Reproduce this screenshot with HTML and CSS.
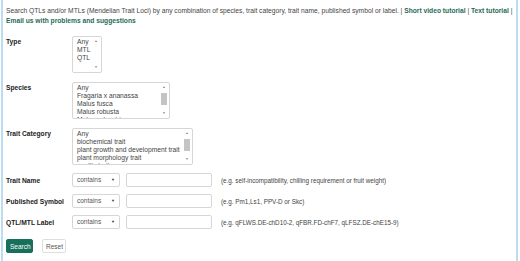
FILE: index.html
```html
<!DOCTYPE html>
<html lang="en">
<head>
    <meta charset="UTF-8">
    <meta name="viewport" content="width=device-width, initial-scale=1.0">
    <title>QTL Search</title>
    <link rel="stylesheet" href="styles.css">
</head>
<body>
    <div class="panel">
        <p class="intro">Search QTLs and/or MTLs (Mendelian Trait Loci) by any combination of species, trait category, trait name, published symbol or label. | <a href="#">Short video tutorial</a> | <a href="#">Text tutorial</a> |<br><a href="#">Email us with problems and suggestions</a></p>

        <form id="searchForm">
            <div class="row top">
                <label>Type</label>
                <div class="listbox type-box">
                    <ul class="opts">
                        <li>Any</li>
                        <li>MTL</li>
                        <li>QTL</li>
                    </ul>
                    <div class="sbar"><span class="arr">&#9650;</span><span class="track"></span><span class="arr">&#9660;</span></div>
                </div>
            </div>

            <div class="row top">
                <label>Species</label>
                <div class="listbox species-box">
                    <ul class="opts">
                        <li>Any</li>
                        <li>Fragaria x ananassa</li>
                        <li>Malus fusca</li>
                        <li>Malus robusta</li>
                        <li>Malus sylvestris</li>
                    </ul>
                    <div class="sbar"><span class="arr">&#9650;</span><span class="track"><span class="thumb"></span></span><span class="arr">&#9660;</span></div>
                </div>
            </div>

            <div class="row top last">
                <label>Trait Category</label>
                <div class="listbox category-box">
                    <ul class="opts">
                        <li>Any</li>
                        <li>biochemical trait</li>
                        <li>plant growth and development trait</li>
                        <li>plant morphology trait</li>
                        <li>quality trait</li>
                    </ul>
                    <div class="sbar"><span class="arr">&#9650;</span><span class="track"><span class="thumb"></span></span><span class="arr">&#9660;</span></div>
                </div>
            </div>

            <div class="row">
                <label>Trait Name</label>
                <div class="dropdown">contains <span class="caret">&#9660;</span></div>
                <input type="text" class="field">
                <span class="hint">(e.g. self-incompatibility, chilling requirement or fruit weight)</span>
            </div>

            <div class="row">
                <label>Published Symbol</label>
                <div class="dropdown">contains <span class="caret">&#9660;</span></div>
                <input type="text" class="field">
                <span class="hint">(e.g. Pm1,Ls1, PPV-D or Skc)</span>
            </div>

            <div class="row">
                <label>QTL/MTL Label</label>
                <div class="dropdown">contains <span class="caret">&#9660;</span></div>
                <input type="text" class="field">
                <span class="hint">(e.g. qFLWS.DE-chD10-2, qFBR.FD-chF7, qLFSZ.DE-chE15-9)</span>
            </div>

            <div class="buttons">
                <button type="submit" class="btn-search">Search</button>
                <button type="reset" class="btn-reset">Reset</button>
            </div>
        </form>
    </div>
</body>
</html>
```

FILE: styles.css
```css
body {
    margin: 0;
    font-family: "Liberation Sans", Arial, sans-serif;
    color: #333;
    background: #fff;
}
.panel {
    margin-left: 1px;
    width: 509px;
    height: 255px;
    padding: 6px 1px 0 3px;
    border: 2px solid #bcdcf0;
    border-top: none;
}
.intro {
    margin: 0;
    font-size: 6.7px;
    line-height: 10px;
    color: #444;
    white-space: nowrap;
}
.intro a {
    color: #1f6b58;
    font-weight: bold;
    text-decoration: none;
}
form {
    margin: 10px 0 0 0;
}
.row {
    display: flex;
    align-items: center;
    margin-bottom: 7px;
}
.row.top {
    align-items: flex-start;
    margin-bottom: 9px;
}
.row.top.last {
    margin-bottom: 8px;
}
.row label {
    width: 66px;
    flex: none;
    font-size: 6.7px;
    font-weight: bold;
    color: #222;
}
.row.top label {
    padding-top: 2px;
}
.listbox {
    display: flex;
    height: 35px;
    border: 1px solid #d6d6d6;
    border-radius: 2px;
    overflow: hidden;
    background: #fff;
}
.type-box { width: 28px; }
.species-box { width: 96px; }
.category-box { width: 119px; }
.opts {
    flex: 1;
    list-style: none;
    margin: 0;
    padding: 1px 0 0 4px;
    font-size: 6.7px;
    line-height: 8px;
    color: #444;
    white-space: nowrap;
    overflow: hidden;
}
.sbar {
    width: 8px;
    display: flex;
    flex-direction: column;
    align-items: center;
    padding: 2px 1px;
}
.arr {
    font-size: 3px;
    line-height: 5px;
    color: #666;
}
.track {
    flex: 1;
    width: 6px;
    padding-top: 3px;
}
.thumb {
    display: block;
    width: 6px;
    height: 12px;
    background: #c4c4c4;
}
.dropdown {
    width: 40px;
    height: 12px;
    padding: 0 2px 0 4px;
    border: 1px solid #d6d6d6;
    border-radius: 2px;
    font-size: 6.5px;
    line-height: 12px;
    color: #555;
    display: flex;
    justify-content: space-between;
}
.caret {
    font-size: 4px;
    color: #333;
    margin-right: 2px;
}
.field {
    width: 84px;
    height: 12px;
    margin: 0 0 0 6px;
    padding: 0;
    border: 1px solid #d6d6d6;
    border-radius: 2px;
}
.hint {
    margin-left: 9px;
    font-size: 6.3px;
    color: #444;
}
.buttons {
    display: flex;
    gap: 9px;
    margin-top: 10px;
}
.buttons button {
    height: 14px;
    padding: 0 3px;
    font-family: inherit;
    font-size: 6.5px;
    border-radius: 2px;
    cursor: pointer;
}
.btn-search {
    width: 27px;
    background: #17705c;
    color: #fff;
    border: 1px solid #17705c;
}
.btn-reset {
    width: 24px;
    background: #fff;
    color: #555;
    border: 1px solid #ddd;
}
```
